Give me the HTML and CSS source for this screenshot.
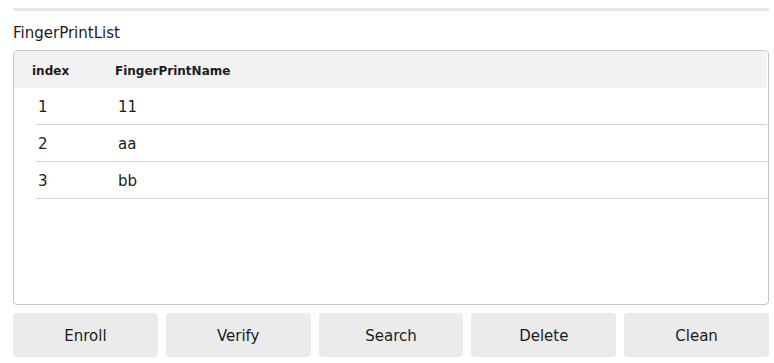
FILE: index.html
```html
<!DOCTYPE html>
<html lang="en">
<head>
    <meta charset="UTF-8">
    <title>FingerPrint</title>
    <link rel="stylesheet" href="styles.css">
</head>
<body>
    <div class="page">
        <div class="top-rule"></div>
        <div class="list-label">FingerPrintList</div>
        <div class="list-box">
            <div class="list-head">
                <span class="head-index">index</span>
                <span class="head-name">FingerPrintName</span>
            </div>
            <div class="list-row">
                <span class="cell-index">1</span>
                <span class="cell-name">11</span>
            </div>
            <div class="list-row">
                <span class="cell-index">2</span>
                <span class="cell-name">aa</span>
            </div>
            <div class="list-row">
                <span class="cell-index">3</span>
                <span class="cell-name">bb</span>
            </div>
        </div>
        <div class="actions">
            <button class="action-btn">Enroll</button>
            <button class="action-btn">Verify</button>
            <button class="action-btn">Search</button>
            <button class="action-btn">Delete</button>
            <button class="action-btn">Clean</button>
        </div>
    </div>
</body>
</html>
```

FILE: styles.css
```css
:root {
    --font-body: 'DejaVu Sans', 'Liberation Sans', sans-serif;
    --color-text: #1c1c1c;
    --color-rule: #e8e8e8;
    --color-border: #c6c6c6;
    --color-head: #f2f2f2;
    --color-line: #d4d4d4;
    --color-btn: #ebebeb;
}
body {
    margin: 0;
    font-family: var(--font-body);
    color: var(--color-text);
    background: #ffffff;
}
.page {
    padding: 8px 5px 0 13px;
}
.top-rule {
    height: 3px;
    background: var(--color-rule);
}

/* list */
.list-label {
    margin-top: 13px;
    font-size: 15px;
    line-height: 18px;
    height: 18px;
}
.list-box {
    margin-top: 8px;
    height: 253px;
    border: 1px solid var(--color-border);
    border-radius: 4px;
    overflow: hidden;
}
.list-head {
    display: flex;
    align-items: center;
    box-sizing: border-box;
    height: 37px;
    padding-top: 2px;
    margin-right: 1px;
    background: var(--color-head);
    font-size: 12px;
    font-weight: bold;
}
.head-index { width: 83px; padding-left: 18px; }
.list-row {
    display: flex;
    align-items: center;
    box-sizing: border-box;
    height: 37px;
    padding-top: 2px;
    margin-left: 21px;
    margin-right: 1px;
    border-bottom: 1px solid var(--color-line);
    font-size: 15px;
}
.cell-index { width: 80px; padding-left: 3px; }

/* buttons */
.actions {
    display: flex;
    gap: 8px;
    margin-top: 8px;
}
.action-btn {
    flex: 1;
    height: 44px;
    border: none;
    border-radius: 4px;
    background: var(--color-btn);
    color: var(--color-text);
    font-family: var(--font-body);
    font-size: 15px;
    padding: 2px 0 0;
}
```
